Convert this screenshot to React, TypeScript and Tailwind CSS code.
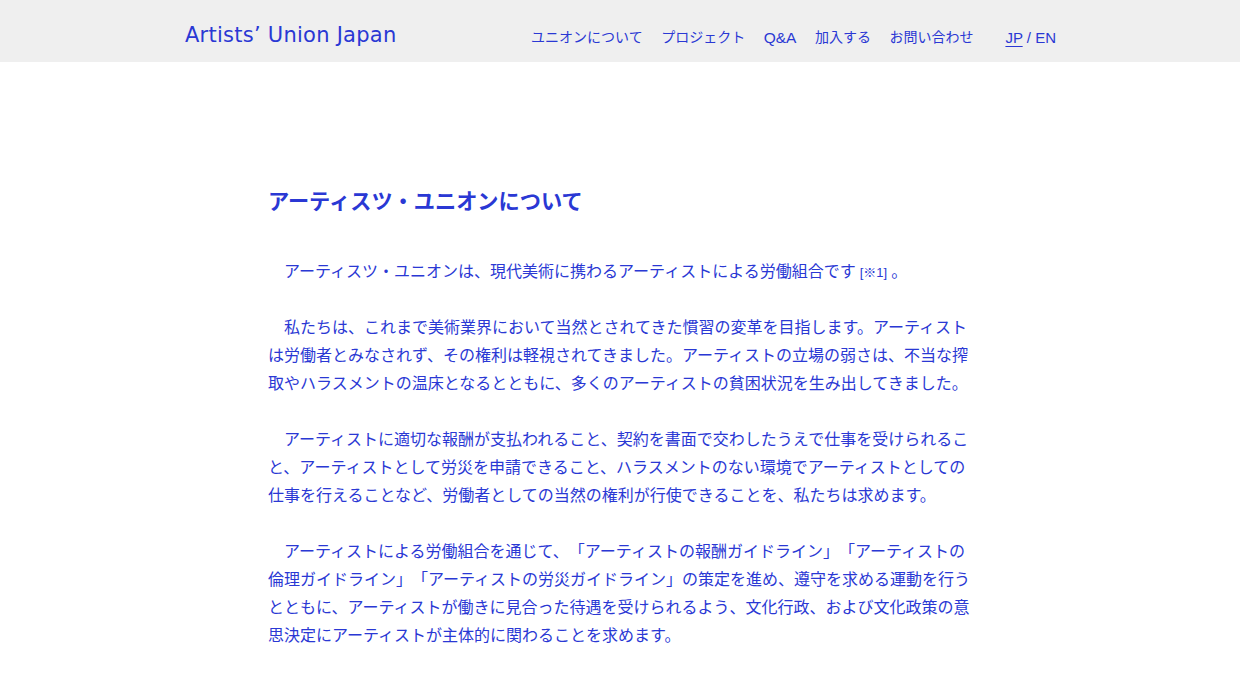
const jp = "font-['Noto_Sans_CJK_JP','Noto_Sans',sans-serif]";

const navItems = ["ユニオンについて", "プロジェクト", "Q&A", "加入する", "お問い合わせ"];

function Header() {
  return (
    <header className="h-[62px] bg-[#efefef]">
      <div className="mx-auto flex h-full w-[872px] items-center justify-between">
        <a className="ml-[1px] pt-[9px] font-['DejaVu_Sans',sans-serif] text-[21px] tracking-[0.25px] text-[#2a38d4]">
          Artists’ Union Japan
        </a>
        <nav className={`${jp} flex items-center pt-[14px] text-[14px] text-[#2a38d4]`}>
          <ul className="flex gap-[18.5px]">
            {navItems.map((item) => (
              <li key={item} className={item === "Q&A" ? "font-['Liberation_Sans',sans-serif] text-[15.5px]" : ""}>
                {item}
              </li>
            ))}
          </ul>
          <div className="ml-[32px] font-['Liberation_Sans',sans-serif] text-[15px]">
            <span className="underline underline-offset-[3px]">JP</span> / EN
          </div>
        </nav>
      </div>
    </header>
  );
}

const paragraphs = [
  "私たちは、これまで美術業界において当然とされてきた慣習の変革を目指します。アーティストは労働者とみなされず、その権利は軽視されてきました。アーティストの立場の弱さは、不当な搾取やハラスメントの温床となるとともに、多くのアーティストの貧困状況を生み出してきました。",
  "アーティストに適切な報酬が支払われること、契約を書面で交わしたうえで仕事を受けられること、アーティストとして労災を申請できること、ハラスメントのない環境でアーティストとしての仕事を行えることなど、労働者としての当然の権利が行使できることを、私たちは求めます。",
  "アーティストによる労働組合を通じて、「アーティストの報酬ガイドライン」「アーティストの倫理ガイドライン」「アーティストの労災ガイドライン」の策定を進め、遵守を求める運動を行うとともに、アーティストが働きに見合った待遇を受けられるよう、文化行政、および文化政策の意思決定にアーティストが主体的に関わることを求めます。",
];

export default function App() {
  return (
    <div className={`${jp} min-h-screen bg-white text-[#2a38d4] [text-spacing-trim:space-all]`}>
      <Header />
      <main className="mx-auto w-[704px] pt-[123px]">
        <h1 className="text-[21.2px] font-bold leading-[30px]">アーティスツ・ユニオンについて</h1>
        <div className="mt-[41px] text-[16px] leading-[28px]">
          <p className="mb-[28px] indent-[1em]">
            アーティスツ・ユニオンは、現代美術に携わるアーティストによる労働組合です
            <span className="ml-[4px] mr-[4px] font-['Liberation_Sans','Noto_Sans_CJK_JP',sans-serif] text-[13px] leading-none">
              [※1]
            </span>
            。
          </p>
          {paragraphs.map((p, i) => (
            <p key={i} className="mb-[28px] indent-[1em]">
              {p}
            </p>
          ))}
        </div>
      </main>
    </div>
  );
}
